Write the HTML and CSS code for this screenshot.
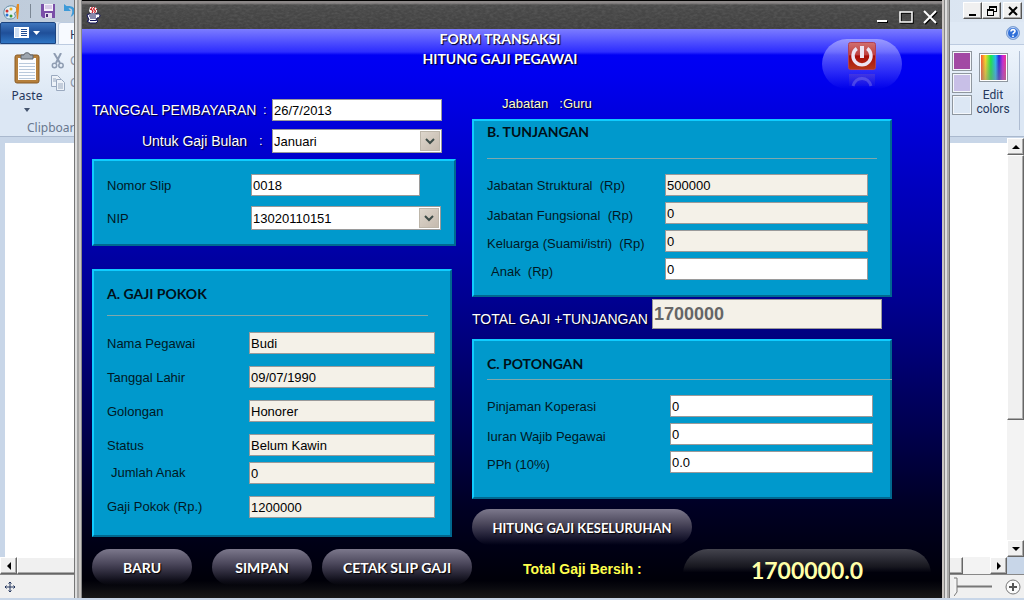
FILE: index.html
```html
<!DOCTYPE html>
<html lang="id">
<head>
<meta charset="utf-8">
<title>Form Transaksi - Hitung Gaji Pegawai</title>
<link rel="stylesheet" href="styles.css">
</head>
<body>
<div class="paint">
  <div class="paint-title">
    <div class="quick">
      <svg class="palette" width="18" height="18" viewBox="0 0 18 18"><path d="M2 12C1 6 6 3 11 4c5 1 5 5 3 6s-2 1-1 3-1 4-5 4-5-2-6-5z" fill="#e4eef4" stroke="#5f8ba6"/><circle cx="5" cy="9" r="1.5" fill="#c33"/><circle cx="9" cy="7" r="1.5" fill="#e8b020"/><circle cx="5" cy="13" r="1.5" fill="#2a6fd0"/><circle cx="9" cy="14" r="1.5" fill="#3a9a3a"/><path d="M15 2l2 0v5l-1 10h-1l-1-10z" fill="#e58a22"/></svg>
      <span class="divider"></span>
      <svg width="14" height="14" viewBox="0 0 14 14"><path d="M0 0h14v14H2l-2-2z" fill="#7a4fa8"/><path d="M3 0h9v7H3z" fill="#f4f0fa"/><path d="M4 2h7M4 4h7" stroke="#b9a6d4"/><path d="M4 9h7v5H4z" fill="#e2dcee"/><path d="M5 10h2v3H5z" fill="#4c2f78"/></svg>
      <svg width="14" height="14" viewBox="0 0 14 14"><path d="M1 0v7h7L5.500 4.500c4-1 5 3 2 8.500 7-4 6-12-4-11z" fill="#3d9ad8"/></svg>
    </div>
    <div class="win-buttons">
      <button type="button" class="win" aria-label="Minimize"><svg width="16" height="14"><path d="M4 10h7v2H4z"/></svg></button>
      <button type="button" class="win" aria-label="Restore"><svg width="16" height="14"><path d="M5 2h8v6h-3v4H3V5h2zM6 4v1h4v2h2V4zM4 7v4h5V7z" fill-rule="evenodd"/></svg></button>
      <button type="button" class="win close" aria-label="Close"><svg width="16" height="14"><path d="M4 3l8 8M12 3l-8 8" stroke="#000" stroke-width="2"/></svg></button>
    </div>
  </div>
  <div class="paint-tabs">
    <button type="button" class="file" aria-label="Menu"><svg width="28" height="14" viewBox="0 0 28 14"><path d="M0 1h15v11H0z" fill="#fff"/><path d="M1 2h4v9H1z" fill="#cfe0f4"/><path d="M7 3.500h6M7 5.500h6M7 7.500h6M7 9.500h6" stroke="#234f94"/><path d="M19 5h7l-3.500 4z" fill="#fff"/></svg></button>
    <span class="tab">Home</span>
    <svg class="help" width="14" height="14" viewBox="0 0 14 14"><circle cx="7" cy="7" r="6.500" fill="#2f6fd8" stroke="#85a4d0"/><circle cx="7" cy="7" r="5.500" fill="none" stroke="#fff" stroke-width=".7"/><path d="M5 5.500C5 3 9 3 9 5.300c0 1.300-2 1.500-2 3M7 9.500v1.600" stroke="#fff" stroke-width="1.600" fill="none"/></svg>
  </div>
  <div class="ribbon">
    <div class="group">
      <div class="tools">
        <button type="button" class="tool">
          <svg width="26" height="32" viewBox="0 0 26 32"><rect x="1" y="3" width="24" height="28" rx="2" fill="#b57f3b" stroke="#8a5c26"/><path d="M4 6h18v22H4z" fill="#fcfdff"/><path d="M5 11.500h16M5 14.500h16M5 17.500h16M5 20.500h16M5 23.500h16M5 26.500h16" stroke="#b9c9dc"/><path d="M7 3h3c0-3 6-3 6 0h3v4H7z" fill="#9da5ae" stroke="#5d646c"/></svg>
          <span>Paste</span>
          <svg width="6" height="4"><path d="M0 0h6L3 4z" fill="#44546e"/></svg>
        </button>
        <div class="edits">
          <span class="edit"><svg width="14" height="16" viewBox="0 0 14 16"><path d="M3 0l6 10M10 0L5 10" stroke="#8f9db2" stroke-width="2"/><circle cx="3.500" cy="12.500" r="2.200" fill="none" stroke="#8f9db2" stroke-width="1.500"/><circle cx="10" cy="12.500" r="2.200" fill="none" stroke="#8f9db2" stroke-width="1.500"/></svg>Cut</span>
          <span class="edit"><svg width="14" height="16" viewBox="0 0 14 16"><path d="M.5.5h6l3 3v8h-9z" fill="#edf2f8" stroke="#9aa9bf"/><path d="M5.500 4.500h5l3 3v8h-8z" fill="#edf2f8" stroke="#9aa9bf"/><path d="M2 4h3M2 6h3M7 9h5M7 11h5M7 13h5" stroke="#9aa9bf"/></svg>Copy</span>
        </div>
      </div>
      <span class="group-name">Clipboard</span>
    </div>
    <div class="colors">
      <div class="swatches"><i class="swatch purple"></i><i class="swatch lavender"></i><i class="swatch"></i></div>
      <button type="button" class="tool"><i class="rainbow"></i><span>Edit<br>colors</span></button>
    </div>
  </div>
  <div class="workspace">
    <div class="canvas"></div>
    <div class="vbar">
      <button type="button" class="sb" aria-label="Up"><svg width="8" height="4"><path d="M4 0l4 4H0z"/></svg></button>
      <div class="thumb"></div>
      <div class="track"></div>
      <button type="button" class="sb" aria-label="Down"><svg width="8" height="4"><path d="M0 0h8L4 4z"/></svg></button>
    </div>
    <div class="hbar">
      <button type="button" class="sb" aria-label="Left"><svg width="4" height="8"><path d="M4 0v8L0 4z"/></svg></button>
      <div class="thumb"></div>
      <div class="track"></div>
      <button type="button" class="sb" aria-label="Right"><svg width="4" height="8"><path d="M0 0v8l4-4z"/></svg></button>
    </div>
  </div>
  <div class="status">
    <svg width="12" height="12" viewBox="0 0 12 12"><path d="M6 1v10M1 6h10M4.500 2.500L6 1l1.500 1.500M4.500 9.500L6 11l1.500-1.500M2.500 4.500L1 6l1.500 1.500M9.500 4.500L11 6 9.500 7.500" fill="none" stroke="#23355c"/></svg>
    <svg width="70" height="20" viewBox="0 0 70 20"><path d="M0 9.500h38" stroke="#777" stroke-width="2"/><path d="M0 1h3v14l-3 4" fill="#f4f4f4" stroke="#777"/><circle cx="59" cy="10" r="7" fill="#fafafa" stroke="#777"/><path d="M55 10h8M59 6v8" stroke="#555" stroke-width="2"/></svg>
  </div>
</div>

<main class="dialog">
  <div class="titlebar">
    <svg class="grain" aria-hidden="true"><filter id="grain"><feTurbulence type="fractalNoise" baseFrequency=".25 .5" numOctaves="3"/><feColorMatrix values="0 0 0 0 .5  0 0 0 0 .5  0 0 0 0 .5  1.500 0 0 0 -.5"/></filter><rect width="100%" height="100%" filter="url(#grain)"/></svg>
    <svg class="java" width="16" height="18" viewBox="0 0 16 18"><path d="M4 1h5l2 2v3l-2 2H5L3 5z" fill="#fff"/><path d="M6.500 1L5 3l2 2-1 2M9 1L7.500 3l2 2-1 2M4 3.500h1M10 3.500h1" stroke="#c41e2a" stroke-width="1.200" fill="none"/><path d="M1 9l2-1h8c4-1 4 4 0 4l-1 2 2 1-2 2H4l-3-2 2-1z" fill="#fff" stroke="#10105a"/><path d="M3 10h7M4 12h6M4 14.500h6" stroke="#10105a"/></svg>
    <div class="controls">
      <button type="button" aria-label="Kecilkan"><svg width="14" height="14"><path d="M2 11h10" stroke="#fff" stroke-width="2"/></svg></button>
      <button type="button" aria-label="Besarkan"><svg width="14" height="14"><path d="M1 2h12v10H1z" stroke="#fff" stroke-width="1.500" fill="none"/></svg></button>
      <button type="button" aria-label="Tutup"><svg width="14" height="14"><path d="M1 1l12 12M13 1L1 13" stroke="#fff" stroke-width="2"/></svg></button>
    </div>
  </div>

  <form class="content">
    <header class="heading">
      <h1>FORM TRANSAKSI<br>HITUNG GAJI PEGAWAI</h1>
      <button type="button" class="power" aria-label="Keluar">
        <svg width="30" height="46" viewBox="0 0 30 46">
          <defs><linearGradient id="red" x1="0" y1="0" x2="0" y2="1"><stop offset="0" stop-color="#d07070"/><stop offset=".45" stop-color="#c04040"/><stop offset=".5" stop-color="#a80c08"/><stop offset="1" stop-color="#b83818"/></linearGradient>
          <linearGradient id="fade" x1="0" y1="0" x2="0" y2="1"><stop offset="0" stop-color="#7050c0" stop-opacity=".4"/><stop offset="1" stop-color="#5040d0" stop-opacity=".1"/></linearGradient></defs>
          <rect x="1.500" y="1.500" width="27" height="27" rx="2" fill="url(#red)" stroke="#b04058"/>
          <path d="M9.800 7.500a9 9 0 1 0 10.400 0" fill="none" stroke="#ece4f4" stroke-width="3.400"/><path d="M15 5v12" stroke="#ece4f4" stroke-width="4"/>
          <path d="M2 33h26v12H2z" fill="url(#fade)"/><path d="M6 45c3-10 15-10 18 0" fill="none" stroke="#8e88ea" stroke-width="3" opacity=".4"/>
        </svg>
      </button>
    </header>

    <div class="columns">
      <div class="left">
        <div class="top-row">
          <label for="tanggal">TANGGAL PEMBAYARAN</label><span class="colon">:</span>
          <input id="tanggal" value="26/7/2013">
        </div>
        <div class="top-row">
          <label for="bulan">Untuk Gaji Bulan</label><span class="colon wide">:</span>
          <div class="combo"><select id="bulan"><option>Januari</option></select><span class="arrow"><svg width="10" height="7"><path d="M1 1l4 4 4-4" fill="none" stroke="#3c4a46" stroke-width="2"/></svg></span></div>
        </div>
        <section class="panel identity">
          <div class="row"><label for="slip">Nomor Slip</label><input id="slip" class="short" value="0018"></div>
          <div class="row"><label for="nip">NIP</label><div class="combo"><select id="nip"><option>13020110151</option></select><span class="arrow"><svg width="10" height="7"><path d="M1 1l4 4 4-4" fill="none" stroke="#3c4a46" stroke-width="2"/></svg></span></div></div>
        </section>
        <section class="panel salary">
          <h2>A. GAJI POKOK</h2>
          <hr>
          <div class="row"><label for="nama">Nama Pegawai</label><input id="nama" readonly value="Budi"></div>
          <div class="row"><label for="lahir">Tanggal Lahir</label><input id="lahir" readonly value="09/07/1990"></div>
          <div class="row"><label for="gol">Golongan</label><input id="gol" readonly value="Honorer"></div>
          <div class="row"><label for="status">Status</label><input id="status" readonly value="Belum Kawin"></div>
          <div class="row sub"><label for="jumlah">Jumlah Anak</label><input id="jumlah" readonly value="0"></div>
          <div class="row"><label for="pokok">Gaji Pokok (Rp.)</label><input id="pokok" readonly value="1200000"></div>
        </section>
      </div>

      <div class="right">
        <p class="position"><span>Jabatan</span><span>:Guru</span></p>
        <section class="panel allowance">
          <h2>B. TUNJANGAN</h2>
          <hr>
          <div class="row"><label for="struk">Jabatan Struktural  (Rp)</label><input id="struk" readonly value="500000"></div>
          <div class="row"><label for="fung">Jabatan Fungsional  (Rp)</label><input id="fung" readonly value="0"></div>
          <div class="row"><label for="kel">Keluarga (Suami/istri)  (Rp)</label><input id="kel" readonly value="0"></div>
          <div class="row sub"><label for="anak">Anak  (Rp)</label><input id="anak" value="0"></div>
        </section>
        <div class="subtotal">
          <label for="total">TOTAL GAJI +TUNJANGAN</label>
          <input id="total" readonly value="1700000">
        </div>
        <section class="panel deduction">
          <h2>C. POTONGAN</h2>
          <hr>
          <div class="row"><label for="pinjam">Pinjaman Koperasi</label><input id="pinjam" value="0"></div>
          <div class="row"><label for="iuran">Iuran Wajib Pegawai</label><input id="iuran" value="0"></div>
          <div class="row"><label for="pph">PPh (10%)</label><input id="pph" value="0.0"></div>
        </section>
        <button type="button" class="pill calc">HITUNG GAJI KESELURUHAN</button>
      </div>
    </div>

    <footer class="footer">
      <div class="actions">
        <button type="button" class="pill new">BARU</button>
        <button type="button" class="pill">SIMPAN</button>
        <button type="button" class="pill print">CETAK SLIP GAJI</button>
      </div>
      <div class="net">
        <span class="net-label">Total Gaji Bersih :</span>
        <output class="net-value">1700000.0</output>
      </div>
    </footer>
  </form>
</main>
</body>
</html>
```
FILE: styles.css
```css
* { box-sizing: border-box; }
body { margin: 0; height: 100vh; min-height: 600px; position: relative; overflow: hidden; font: 13px/20px "Liberation Sans", Arial, sans-serif; color: #000; }
button { font: inherit; color: inherit; padding: 0; border: 0; background: none; display: flex; align-items: center; justify-content: center; }
svg { display: block; flex: none; }

/* Background drawing program */
.paint { height: 100%; display: flex; flex-direction: column; background: #c8d6e8; font: 12px/18px "Noto Sans", sans-serif; color: #26375c; padding-bottom: 2px; }
.paint-title { height: 22px; flex: none; display: flex; justify-content: space-between; background: linear-gradient(90deg, #bfccdb, #dde7f3); }
.quick { display: flex; align-items: center; gap: 8px; padding: 0 2px; }
.divider { width: 1px; height: 14px; background: #7b8794; margin: 0 2px; }
.win-buttons { display: flex; padding: 2px 2px 0 0; }
.win { width: 19px; height: 17px; background: #f0f0f0; border: 1px solid; border-color: #fff #555 #555 #fff; box-shadow: inset -1px -1px #aaa; }
.win.close { margin-left: 2px; }
.paint-tabs { height: 23px; flex: none; display: flex; align-items: stretch; background: #dfe9f5; border-bottom: 1px solid #bccbe0; }
.file { width: 56px; background: linear-gradient(#3f76bd, #1f4f99 50%, #2f76c4); border: 1px solid #1c4480; border-radius: 2px 2px 0 0; }
.tab { margin-left: 2px; padding: 3px 11px 0; width: 60px; background: #f7faff; border: 1px solid #bccbe0; border-bottom: 0; border-radius: 3px 3px 0 0; }
.help { margin: 4px 4px 0 auto; }
.ribbon { height: 92px; flex: none; display: flex; justify-content: space-between; background: linear-gradient(#edf4fc, #dce7f4 60%, #dce7f4); border-bottom: 1px solid #aab9ce; }
.group { width: 140px; display: flex; flex-direction: column; justify-content: space-between; }
.tools { display: flex; }
.tool { flex-direction: column; justify-content: flex-start; width: 54px; padding-top: 8px; font: 12px/14px Roboto, sans-serif; gap: 6px; }
.tools .tool { padding-top: 7px; gap: 4px; font: 12px/16px "Noto Sans", sans-serif; }
.edits { display: flex; flex-direction: column; gap: 6px; padding-top: 8px; color: #8d97a8; margin-left: -3px; }
.edit { display: flex; gap: 5px; line-height: 16px; }
.group-name { padding-left: 27px; line-height: 16px; color: #69788f; }
.colors { display: flex; padding: 6px 0; }
.swatches { display: flex; flex-direction: column; gap: 2px; }
.swatch { width: 20px; height: 20px; border: 1px solid #8f979f; box-shadow: inset 0 0 0 1px #f4f7fb; }
.purple { background: #a249a4; }
.lavender { background: #c8bfe7; }
.colors .tool { width: 48px; padding: 2px 5px 0 0; margin-right: 4px; border-right: 1px solid #afbdd2; }
.rainbow { width: 29px; height: 29px; flex: none; border: 1px solid #8f979f; box-shadow: inset 0 0 0 1px #fff; background: linear-gradient(transparent, #8888), linear-gradient(90deg, #f33, #fd2 20%, #1e4 40%, #2bf 58%, #22d 70%, #c2d 84%, #f37); }

.workspace { flex: 1; display: grid; grid-template: 1fr 17px / 1fr 17px; padding-top: 1px; }
.canvas { background: #fff; margin: 5px 0 0 5px; }
.vbar, .hbar { display: flex; }
.vbar { flex-direction: column; }
.sb { width: 17px; height: 17px; flex: none; }
.sb, .thumb { background: #f0f0f0; border: 1px solid; border-color: #fff #666 #666 #fff; box-shadow: inset -1px -1px #aaa; }
.thumb { flex: 264; }
.track { flex: 121; background: #f3f3f3; }
.hbar .thumb { flex: 946; }
.hbar .track { flex: 27; }
.status { height: 24px; flex: none; display: flex; justify-content: space-between; align-items: center; padding-left: 4px; background: #f0f0f0; border-top: 1px solid #888; }

/* Foreground window */
.dialog { position: absolute; inset: 0 74px 2px; display: flex; flex-direction: column; border: solid #aaa; border-width: 0 8px; border-image: linear-gradient(90deg, #777 0 1px, #ddd 1px 3px, #a4a4a4 3px 5px, #c9c5c2 5px 7px, #888 7px 8px, #888 8px calc(100% - 8px), #c9c5c2 calc(100% - 8px) calc(100% - 6px), #888 calc(100% - 6px) calc(100% - 5px), #ddd calc(100% - 5px) calc(100% - 3px), #aaa calc(100% - 3px) calc(100% - 1px), #777 calc(100% - 1px)) 0 8; }
.titlebar { position: relative; height: 29px; flex: none; display: flex; justify-content: space-between; align-items: flex-start; padding: 6px 5px 0 4px; background: linear-gradient(#000 0 1px, #8a8686 1px 3px, #4a4a4a 5px, #404040); }
.grain { position: absolute; inset: 3px 0 0; width: 100%; height: 26px; opacity: .16; }
.java { position: relative; }
.controls { position: relative; display: flex; gap: 10px; padding-top: 4px; filter: drop-shadow(1px 1px 0 #000); }
.content { flex: 1; display: flex; flex-direction: column; background: linear-gradient(#7c7cff, #2c2cff 23px, transparent 26px), linear-gradient(#0000fa, #0000f0 8%, #0000c8 24%, #000090 48%, #000050 70%, #000024 84%, #000008 97%, #181818); }

.heading { display: grid; grid-template-columns: 1fr auto 1fr; padding-right: 24px; height: 66px; }
.heading h1 { grid-column: 2; }
h1, h2, .pill, .net-value { margin: 0; font: bold 14px/20px "Century Gothic", Lato, sans-serif; }
h1 { color: #fff; text-align: center; text-shadow: 1px 1px 1px #002; }
.power { justify-self: end; align-items: flex-start; margin: 10px 16px 0 0; width: 80px; height: 50px; padding-top: 2px; border-radius: 25px; background: linear-gradient(#aaaaffcc, #6666ff99 50%, #4444ff00); }

.columns, .footer { display: grid; grid-template-columns: 380fr 470fr; padding-left: 10px; }
.left { padding-top: 4px; }
label { white-space: pre; }
input, select { font: 13px/16px "Liberation Sans", Arial, sans-serif; color: #000; width: 100%; height: 22px; margin: 0; padding: 0 1px; border: 1px solid #9a9a9a; border-radius: 0; background: #fff; min-width: 0; }
input:read-only { background: #f4f1e8; }
.combo { display: grid; flex: 1; }
.combo > * { grid-area: 1 / 1; }
select { height: 24px; appearance: none; padding: 1px 24px 0 1px; }
.arrow { justify-self: end; width: 20px; margin: 2px; display: flex; align-items: center; justify-content: center; background: linear-gradient(135deg, #ddd6cc, #c5baae); border: 1px solid #bdb6aa; pointer-events: none; }

.top-row { display: flex; align-items: center; margin: 0 30px 8px 0; color: #fff; text-shadow: 1px 1px 1px #002; }
.top-row label { width: 163px; font-size: 14px; text-align: right; }
.top-row .colon { width: 17px; padding-left: 8px; }
.top-row .wide { width: 25px; padding-left: 12px; }
.top-row label:has(+ .wide) { width: 155px; }
.top-row input, .top-row select { flex: 1; text-shadow: none; }
.top-row + .top-row { margin-bottom: 6px; }

.panel { background: #0099cc; border: 2px solid; border-color: #10ccff #00688f #00688f #10ccff; padding: 0 13px; }
.panel h2 { color: #001018; }
.panel hr { margin: 0; border: 0; border-top: 1px solid #80a8ac; }
.row { display: grid; grid-template-columns: 142px 1fr; align-items: center; color: #001824; }
.row label { padding-top: 2px; }
.sub label { padding-left: 4px; }
.identity { margin-right: 16px; padding-top: 13px; padding-bottom: 14px; }
.identity .row { grid-template-columns: 144px 1fr; }
.identity .row + .row { margin-top: 10px; }
.short { width: 89%; }
.salary { margin: 23px 20px 0 0; padding: 13px 15px 17px 13px; }
.salary hr { margin: 11px 7px 16px 0; }
.salary .row + .row { margin-top: 12px; }
.salary .row + .sub { margin-top: 6px; }
.salary .sub label, .salary .sub + .row label { padding-top: 0; }

.position { margin: 0 0 6px 30px; display: flex; gap: 11px; line-height: 18px; color: #ffffc8; text-shadow: 1px 1px 1px #002; }
.right .panel { margin-right: 50px; }
.right .row + .row { margin-top: 6px; }
.right .row + .row label { padding-top: 6px; line-height: 16px; }
.allowance { padding: 1px 22px 15px 13px; }
.allowance .row { grid-template-columns: 178px 1fr; }
.allowance hr { margin: 16px -9px 15px 0; }
.subtotal { display: flex; align-items: flex-end; margin: 2px 60px 10px 0; color: #fff; }
.subtotal label { width: 180px; font-size: 14px; text-shadow: 1px 1px 1px #002; }
.subtotal input { flex: 1; height: 30px; font-size: 18px; font-weight: bold; color: #666; }
.deduction { padding: 13px 17px 24px 13px; }
.deduction hr { margin: 5px -19px 15px 0; }
.deduction .row { grid-template-columns: 183px 1fr; }

.pill { height: 36px; width: 100px; padding-top: 2px; border-radius: 18px; color: #fff; background: linear-gradient(#7c788c, #4c485c 40%, #14142400); white-space: nowrap; text-shadow: 1px 1px 1px #000; }
.calc { width: 220px; margin-top: 10px; font-size: 13px; }
.footer { margin-top: 4px; }
.actions { display: flex; }
.new { margin-right: 20px; }
.print { width: 150px; margin-left: 10px; }
.net { display: flex; align-items: center; }
.net-label { width: 211px; padding: 4px 0 0 51px; font-size: 14px; font-weight: bold; color: #ffff4c; white-space: nowrap; }
.net-value { flex: 1; margin-right: 11px; height: 36px; padding-top: 3px; border-radius: 25px 25px 0 0; text-align: center; font-size: 23px; line-height: 36px; color: #ffffa8; background: linear-gradient(#44444e, #16161e 50%, #00000000 65%); }
```
